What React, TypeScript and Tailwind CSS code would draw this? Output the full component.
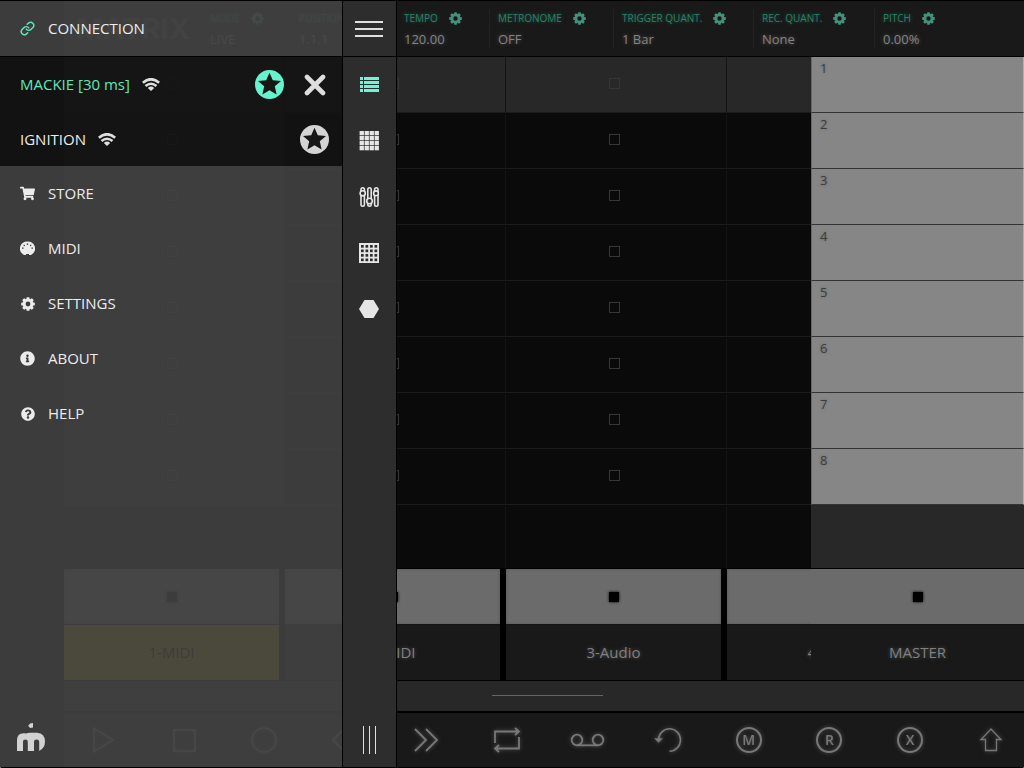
import type { ReactNode } from "react";
import { FaInfoCircle, FaQuestionCircle, FaShoppingCart } from "react-icons/fa";

const scenes = [1, 2, 3, 4, 5, 6, 7, 8];

const tracks = [
  { name: "1-MIDI", selected: true },
  { name: "2-MIDI", selected: false },
  { name: "3-Audio", selected: false },
  { name: "4-Audio", selected: false },
];

const readouts = [
  { label: "MODE", value: "LIVE", width: "w-[89px]", gear: true },
  { label: "POSITION", value: "1.1.1", width: "w-[105px]", gear: false },
  { label: "TEMPO", value: "120.00", width: "w-[94px]", gear: true },
  { label: "METRONOME", value: "OFF", width: "w-[124px]", gear: true },
  { label: "TRIGGER QUANT.", value: "1 Bar", width: "w-[140px]", gear: true },
  { label: "REC. QUANT.", value: "None", width: "w-[121px]", gear: true },
  { label: "PITCH", value: "0.00%", width: "w-[110px]", gear: true },
];

function Gear({ className }: { className: string }) {
  return (
    <svg viewBox="0 0 14 14" className={className} aria-hidden="true">
      <circle cx="7" cy="7" r="3.9" fill="none" stroke="currentColor" strokeWidth="3" />
      {[0, 45, 90, 135, 180, 225, 270, 315].map((a) => (
        <rect key={a} x="5.5" y="0.2" width="3" height="3" rx="0.6" fill="currentColor" transform={`rotate(${a} 7 7)`} />
      ))}
    </svg>
  );
}

function Wifi() {
  return (
    <svg viewBox="0 0 18 13" className="h-[13px] w-[18px]" fill="none" stroke="#dedede" aria-label="Wi-Fi">
      <path d="M0.8 4.8Q9 -2.2 17.2 4.8" strokeWidth="2.8" />
      <path d="M3.5 8Q9 3.4 14.5 8" strokeWidth="2.5" />
      <path d="M5.8 9.9Q9 7.2 12.2 9.9L9 13Z" fill="#dedede" stroke="none" />
    </svg>
  );
}

function StarBadge({ className }: { className: string }) {
  return (
    <svg viewBox="0 0 29 29" className={`size-[29px] ${className}`} aria-hidden="true">
      <circle cx="14.5" cy="14.5" r="14.5" fill="currentColor" />
      <path
        d="M14.5 2.7L17.8 10.2L26 10.9L19.8 16.3L21.6 24.6L14.5 20.2L7.4 24.6L9.2 16.3L3 10.9L11.2 10.2Z"
        fill="#161616"
      />
    </svg>
  );
}

function LinkIcon() {
  return (
    <svg viewBox="0 0 24 24" className="size-[15px] text-[#5fe8c0]" fill="none" stroke="currentColor" strokeWidth="2.3" strokeLinecap="round" aria-hidden="true">
      <path d="M10 13a5 5 0 0 0 7.5.5l3.5-3.5a5 5 0 0 0-7-7l-2.5 2.3" />
      <path d="M14 11a5 5 0 0 0-7.5-.5L3 14a5 5 0 0 0 7 7l2.4-2.3" />
    </svg>
  );
}

function MidiIcon() {
  return (
    <svg viewBox="0 0 15 15" className="size-[15px]" aria-hidden="true">
      <path d="M7.5 0.6A7.3 7 0 0 1 12.4 13L11 14H9V13H6V14H4L2.6 13A7.3 7 0 0 1 7.5 0.6Z" fill="currentColor" />
      <g fill="#3f3f3f">
        <rect x="2" y="6.5" width="1.6" height="1.2" />
        <rect x="3.6" y="3.8" width="1.3" height="1.3" />
        <rect x="6.8" y="2.4" width="1.3" height="1.5" />
        <rect x="10" y="3.8" width="1.3" height="1.3" />
        <rect x="11.4" y="6.5" width="1.6" height="1.2" />
      </g>
    </svg>
  );
}

const menu: { label: string; icon: ReactNode }[] = [
  { label: "STORE", icon: <FaShoppingCart className="size-[15px]" /> },
  { label: "MIDI", icon: <MidiIcon /> },
  { label: "SETTINGS", icon: <Gear className="size-[14px]" /> },
  { label: "ABOUT", icon: <FaInfoCircle className="size-[15px]" /> },
  { label: "HELP", icon: <FaQuestionCircle className="size-[14px]" /> },
];

const quad = [0, 1, 2, 3];

const views: { label: string; icon: ReactNode }[] = [
  {
    label: "Scene list",
    icon: (
      <svg viewBox="0 0 20 20" className="size-5 text-[#6ff5d5]" fill="currentColor">
        {quad.map((i) => (
          <g key={i}>
            <rect x="1" y={2 + i * 4} width="3" height="3" />
            <rect x="5" y={2 + i * 4} width="15" height="3" />
          </g>
        ))}
      </svg>
    ),
  },
  {
    label: "Clip matrix",
    icon: (
      <svg viewBox="0 0 20 20" className="size-5" fill="currentColor">
        {quad.map((r) => quad.map((c) => <rect key={`${r}${c}`} x={0.6 + c * 5} y={r * 5} width="4.3" height="4.3" />))}
      </svg>
    ),
  },
  {
    label: "Mixer",
    icon: (
      <svg viewBox="0 0 20 20" className="size-5" fill="none" stroke="currentColor" strokeWidth="1.6">
        <rect x="2" y="0.8" width="3.4" height="18.4" rx="1.7" />
        <rect x="8.8" y="0.8" width="3.4" height="18.4" rx="1.7" />
        <rect x="15.6" y="0.8" width="3.4" height="18.4" rx="1.7" />
        <circle cx="3.7" cy="6.3" r="2.6" fill="#2d2d2d" />
        <circle cx="10.5" cy="14" r="2.8" fill="#2d2d2d" />
        <circle cx="17" cy="6.3" r="2.4" fill="#2d2d2d" />
      </svg>
    ),
  },
  {
    label: "Pads",
    icon: (
      <svg viewBox="0 0 20 20" className="size-5">
        <rect width="20" height="20" fill="currentColor" />
        {quad.map((r) =>
          quad.map((c) => <rect key={`${r}${c}`} x={2 + c * 4.5} y={2 + r * 4.5} width="2.7" height="2.7" fill="#2d2d2d" />),
        )}
      </svg>
    ),
  },
  {
    label: "Keys",
    icon: (
      <svg viewBox="0 0 20 20" className="size-5">
        <path d="M5.5 1H14.5L20 10L14.5 19H5.5L0 10Z" fill="currentColor" />
      </svg>
    ),
  },
];

function Glyph({ children, width = 1.8 }: { children: ReactNode; width?: number }) {
  return (
    <svg viewBox="0 0 26 26" className="size-[26px] overflow-visible" fill="none" stroke="currentColor" strokeWidth={width}>
      {children}
    </svg>
  );
}

function Ring({ letter }: { letter: string }) {
  return (
    <span className="flex size-[26px] items-center justify-center rounded-full border-2 border-current text-[14px] leading-none font-semibold">
      {letter}
    </span>
  );
}

const transport: { label: string; icon: ReactNode }[] = [
  { label: "Play", icon: <Glyph><path d="M4 1.5V24.5L23 13Z" /></Glyph> },
  { label: "Stop", icon: <Glyph><rect x="3" y="3" width="21" height="21" /></Glyph> },
  { label: "Record", icon: <Glyph><circle cx="13" cy="13" r="12" /></Glyph> },
  { label: "Back", icon: <Glyph><path d="M12 2L1 13L12 24M23 2L12 13L23 24" /></Glyph> },
  { label: "Forward", icon: <Glyph><path d="M2 2L13 13L2 24M13 2L24 13L13 24" /></Glyph> },
  {
    label: "Loop",
    icon: (
      <Glyph>
        <path d="M1 16V4.5H25M21 1L25 4.5L21 8" />
        <path d="M25 10V21.5H1M5 18L1 21.5L5 25" />
      </Glyph>
    ),
  },
  {
    label: "Session record",
    icon: (
      <Glyph>
        <circle cx="3" cy="13" r="5.3" />
        <circle cx="24" cy="13" r="5.3" />
        <path d="M3 18.3H24" />
      </Glyph>
    ),
  },
  {
    label: "Undo",
    icon: (
      <Glyph width={1.6}>
        <path d="M3.5 13A11 11.2 0 1 1 14.5 24.2" />
        <path d="M1 12L3.5 14.5L6 12Z" fill="currentColor" />
      </Glyph>
    ),
  },
  { label: "Mute", icon: <Ring letter="M" /> },
  { label: "Arm", icon: <Ring letter="R" /> },
  { label: "Crossfade", icon: <Ring letter="X" /> },
  { label: "Shift", icon: <Glyph width={1.3}><path d="M13 2L23 12.5H18.5V23.5H7.5V12.5H3Z" /></Glyph> },
];

function StopSquare() {
  return <span className="size-[10px] bg-black shadow-[0_0_3px_#000]" />;
}

function Readouts() {
  return (
    <header className="flex h-14 shrink-0 items-center overflow-hidden border-b border-black bg-[#191919]">
      <div className="w-[137px] shrink-0 pl-3 font-[Inter,sans-serif] text-[29px] leading-none font-bold text-[#4a4a4a]">
        MATRIX
      </div>
      {readouts.map((r, i) => (
        <div
          key={r.label}
          className={`${r.width} flex h-10 shrink-0 flex-col justify-end border-l pl-2 ${i > 2 ? "border-[#222]" : "border-transparent"}`}
        >
          <button type="button" className="flex h-5 items-center gap-[11px] text-[10px] text-[#2f8068] [text-shadow:0_0_4px_#1f5f4c]">
            {r.label}
            {r.gear && <Gear className="size-[13px] text-[#43907b]" />}
          </button>
          <span className="text-[13px] leading-5 text-[#848484] [text-shadow:0_0_4px_#555]">{r.value}</span>
        </div>
      ))}
    </header>
  );
}

function Track({ name, selected }: { name: string; selected: boolean }) {
  return (
    <section className="flex w-[221px] shrink-0 flex-col">
      {scenes.map((s) => (
        <button
          type="button"
          key={s}
          aria-label={`${name} clip ${s}`}
          className={`flex h-14 shrink-0 items-center justify-center border-r border-b border-r-[#141414] border-b-[#1b1b1b] pr-[3px] pb-[3px] ${
            s === 1 ? "bg-[#282828]" : selected ? "bg-[#1c1c1c]" : "bg-[#0a0a0a]"
          }`}
        >
          <span className="size-[11px] border border-[#363636]" />
        </button>
      ))}
      <div className="flex-1 border-r border-b border-r-[#141414] border-b-black bg-[#0a0a0a]" />
      <div className="flex shrink-0 flex-col bg-black pr-[6px]">
        <button
          type="button"
          aria-label={`Stop ${name}`}
          className="flex h-14 items-center justify-center border-b border-[#141414] bg-[#6b6b6b] shadow-[inset_0_0_3px_#555]"
        >
          <StopSquare />
        </button>
        <button
          type="button"
          className={`flex h-[55px] items-center justify-center text-[15px] ${
            selected ? "bg-[#a69000] text-black" : "bg-[#191919] text-[#808080] [text-shadow:0_0_4px_#555]"
          }`}
        >
          {name}
        </button>
      </div>
    </section>
  );
}

function Master() {
  return (
    <section className="flex w-[213px] shrink-0 flex-col">
      {scenes.map((s) => (
        <button
          type="button"
          key={s}
          className="flex h-14 shrink-0 items-start border-x border-b border-r-[#b0b0b0] border-b-[#333] border-l-[#666] bg-[#868686] pt-px pl-2 text-[13px] leading-5 text-[#3c3c3c] [text-shadow:0_0_3px_#666]"
        >
          {s}
        </button>
      ))}
      <div className="flex-1 border-b border-black bg-[#282828]" />
      <button
        type="button"
        aria-label="Stop all"
        className="flex h-14 shrink-0 items-center justify-center border-b border-[#141414] bg-[#6b6b6b]"
      >
        <StopSquare />
      </button>
      <button
        type="button"
        className="flex h-[55px] shrink-0 items-center justify-center bg-[#191919] text-[15px] text-[#808080] [text-shadow:0_0_4px_#555]"
      >
        MASTER
      </button>
    </section>
  );
}

function Drawer() {
  return (
    <aside className="absolute inset-y-0 left-0 flex border-y border-black">
      <nav className="flex w-[342px] flex-col text-[15px] text-[#ececec]">
        <button type="button" className="flex h-[55px] shrink-0 items-center gap-[13px] bg-[#424242]/91 pl-5">
          <LinkIcon />
          CONNECTION
        </button>
        <ul className="shrink-0 border-t border-black bg-[#141414]/91">
          <li className="flex h-[55px] items-center pr-[13px] pl-5 text-[#5fe8b8]">
            <span>MACKIE [30 ms]</span>
            <span className="ml-3">
              <Wifi />
            </span>
            <button type="button" aria-label="Favourite MACKIE" className="ml-auto">
              <StarBadge className="text-[#66f2cc]" />
            </button>
            <button type="button" aria-label="Disconnect MACKIE" className="ml-4 flex size-[29px] items-center justify-center">
              <svg viewBox="0 0 22 22" className="size-[22px]">
                <path d="M3 3L19 19M19 3L3 19" stroke="#dedede" strokeWidth="4.6" strokeLinecap="round" />
              </svg>
            </button>
          </li>
          <li className="flex h-[54px] items-center pr-[13px] pl-5">
            <span>IGNITION</span>
            <span className="ml-3">
              <Wifi />
            </span>
            <button type="button" aria-label="Favourite IGNITION" className="ml-auto">
              <StarBadge className="text-[#d4d4d4]" />
            </button>
          </li>
        </ul>
        <div className="flex flex-1 flex-col bg-[#424242]/91">
          {menu.map((m) => (
            <button type="button" key={m.label} className="flex h-[55px] shrink-0 items-center gap-[13px] pl-5">
              <span className="flex w-[15px] justify-center">{m.icon}</span>
              {m.label}
            </button>
          ))}
          <svg viewBox="0 0 28 28" className="mt-auto mb-4 ml-[17px] size-7 shrink-0" fill="#d2d2d2" aria-label="Logo">
            <path d="M13 0.5L16 0V4.5L13 5L11.2 2.8Z" />
            <path d="M0 28V17Q0 10.5 6.5 10.2Q8 10 9.2 10.6Q10.5 9.8 13 9.8H20Q28 10.5 28 18.5Q28 25 22.2 28V18.5Q22.2 16.5 19.6 16.5Q17 16.5 17 18.5V28H10.8V18.5Q10.8 16.5 8.4 16.5Q6 16.5 6 18.5V28Z" />
          </svg>
        </div>
      </nav>
      <div className="flex w-[55px] flex-col items-stretch border-x border-black bg-[#2d2d2d] text-[#e6e6e6]">
        <button type="button" aria-label="Menu" className="flex h-14 shrink-0 flex-col items-center justify-center gap-[5px] border-b border-black pr-px">
          <span className="h-[2px] w-7 bg-[#e0e0e0]" />
          <span className="h-[2px] w-7 bg-[#e0e0e0]" />
          <span className="h-[2px] w-7 bg-[#e0e0e0]" />
        </button>
        {views.map((v) => (
          <button type="button" key={v.label} aria-label={v.label} className="flex h-14 shrink-0 items-center justify-center pr-px">
            {v.icon}
          </button>
        ))}
        <button type="button" aria-label="Resize" className="mt-auto mb-[13px] flex h-7 shrink-0 justify-center gap-[5px] pr-px">
          <span className="w-px bg-[#e0e0e0]" />
          <span className="w-px bg-[#e0e0e0]" />
          <span className="w-px bg-[#e0e0e0]" />
        </button>
      </div>
    </aside>
  );
}

export default function App() {
  return (
    <div className="bg-white font-['Open_Sans','Noto_Sans',sans-serif]">
      <div className="relative flex min-h-screen flex-col overflow-hidden rounded-b-[2px] bg-black">
        <main className="ml-16 flex flex-1 flex-col border-y border-black">
          <Readouts />
          <div className="flex flex-1">
            <div className="flex min-w-0 flex-1 overflow-hidden bg-[#191919]">
              {tracks.map((t) => (
                <Track key={t.name} {...t} />
              ))}
            </div>
            <Master />
          </div>
          <div className="flex h-8 shrink-0 items-center border-y border-black bg-[#282828] pl-[428px]">
            <div className="mb-px h-px w-[111px] bg-[#2f806a]" />
          </div>
          <footer className="flex h-[55px] shrink-0 items-center justify-between border-t border-black bg-[#191919] pr-5 pb-px pl-[26px] text-[#787878]">
            {transport.map((t) => (
              <button type="button" key={t.label} aria-label={t.label} className="drop-shadow-[0_0_2px_#555]">
                {t.icon}
              </button>
            ))}
          </footer>
        </main>
        <Drawer />
      </div>
    </div>
  );
}
